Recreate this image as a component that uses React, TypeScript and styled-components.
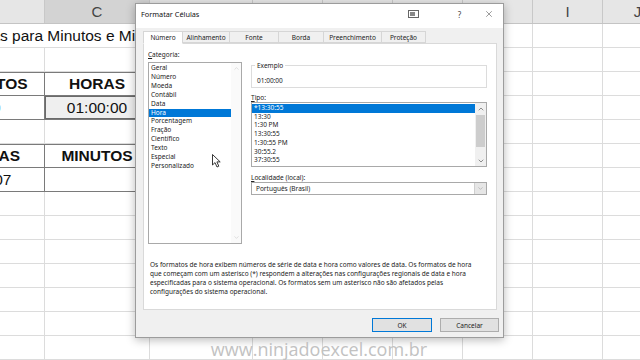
import React from 'react'
import styled, { createGlobalStyle } from 'styled-components'
import { X, ChevronUp, ChevronDown } from 'lucide-react'

const GlobalStyle = createGlobalStyle`
  html, body {
    margin: 0;
    padding: 0;
    overflow: hidden;
    background: #fff;
  }
`

const COLS = '49px 105px 105px 103px 70px 70px 70px 70px 70px 70px 70px'
const LETTERS = ['A', 'B', 'C', 'D', 'E', 'F', 'G', 'H', 'I', 'J', 'K']

const Screen = styled.div`
  position: relative;
  width: 640px;
  height: 360px;
  overflow: hidden;
  background: #fff;
  font-family: 'Liberation Sans', Arial, sans-serif;
`

// ---------- spreadsheet ----------
const Sheet = styled.div`
  margin-left: -109px;
  width: max-content;
`
const HeaderRow = styled.div`
  display: grid;
  grid-template-columns: ${COLS};
  height: 24px;
  box-sizing: border-box;
  background: #e6e6e6;
  border-bottom: 1px solid #c4c4c4;
`
const ColHead = styled.div<{ $active?: boolean }>`
  display: flex;
  align-items: center;
  justify-content: center;
  border-right: 1px solid #c8c8c8;
  background: ${p => (p.$active ? '#d3d3d3' : 'transparent')};
  color: #444;
  font-size: 15px;
`
const Row = styled.div`
  display: grid;
  grid-template-columns: ${COLS};
  height: 24px;
`
const Cell = styled.div<{ $table?: boolean; $top?: boolean; $bold?: boolean; $selected?: boolean }>`
  box-sizing: border-box;
  display: flex;
  align-items: center;
  justify-content: center;
  border-right: 1px solid ${p => (p.$table ? '#7a7a7a' : '#dcdcdc')};
  border-bottom: 1px solid ${p => (p.$table ? '#7a7a7a' : '#dcdcdc')};
  box-shadow: ${p =>
    p.$selected
      ? 'inset 0 0 0 1px #6a6a6a'
      : p.$top
        ? 'inset 0 1px 0 #7a7a7a'
        : 'none'};
  background: ${p => (p.$selected ? '#efefef' : 'transparent')};
  font-size: 15.5px;
  font-weight: ${p => (p.$bold ? 700 : 400)};
  color: #111;
  white-space: nowrap;
`
const TitleCell = styled(Cell)`
  grid-column: span 7;
  justify-content: flex-start;
  padding-left: 3px;
  overflow: visible;
`

type TableRow = { cells: [string, string]; bold?: boolean; top?: boolean; selectC?: boolean }
const TABLE: Record<number, TableRow> = {
  4: { cells: ['MINUTOS', 'HORAS'], bold: true, top: true },
  5: { cells: ['60', '01:00:00'], selectC: true },
  7: { cells: ['HORAS', 'MINUTOS'], bold: true, top: true },
  8: { cells: ['1,007', ''] },
}

function SheetRow({ n }: { n: number }) {
  if (n === 2) {
    return (
      <Row>
        <TitleCell>Converter Horas para Minutos e Minutos para Horas</TitleCell>
        {LETTERS.slice(7).map(l => <Cell key={l} />)}
      </Row>
    )
  }
  const t = TABLE[n]
  return (
    <Row>
      {LETTERS.map((l, i) => {
        if (t && (i === 1 || i === 2)) {
          return (
            <Cell key={l} $table $top={t.top} $bold={t.bold} $selected={i === 2 && t.selectC}>
              {t.cells[i - 1]}
            </Cell>
          )
        }
        return <Cell key={l} />
      })}
    </Row>
  )
}

// ---------- dialog ----------
const Dialog = styled.div`
  position: absolute;
  left: 135px;
  top: 3px;
  width: 369px;
  height: 335px;
  box-sizing: border-box;
  display: flex;
  flex-direction: column;
  background: #f0f0f0;
  border: 1px solid #9c9c9c;
  box-shadow: 0 2px 9px rgba(0, 0, 0, 0.28);
  font-family: 'Noto Sans', 'Liberation Sans', sans-serif;
  font-size: 6.5px;
  color: #1b1b1b;
`
const TitleBar = styled.div`
  height: 24px;
  box-sizing: border-box;
  display: flex;
  align-items: center;
  padding: 0 0 4px 5px;
  background: #fff;
`
const TitleText = styled.div`
  flex: 1;
  font-size: 7.3px;
  color: #111;
`
const TitleButton = styled.div<{ $w: number; $gap?: number }>`
  width: ${p => p.$w}px;
  margin-right: ${p => p.$gap ?? 0}px;
  height: 100%;
  display: flex;
  align-items: center;
  justify-content: center;
  color: #444;
  font-size: 8px;
`
const TabBar = styled.div`
  display: flex;
  margin: 3px 0 0 7px;
  height: 12px;
  position: relative;
  z-index: 1;
`
const Tab = styled.div<{ $active?: boolean; $w: number }>`
  width: ${p => p.$w}px;
  box-sizing: border-box;
  display: flex;
  align-items: center;
  justify-content: center;
  border: 1px solid #d6d6d6;
  border-left: ${p => (p.$active ? '1px solid #d6d6d6' : 'none')};
  border-bottom: ${p => (p.$active ? '1px solid #fff' : '1px solid #d6d6d6')};
  background: ${p => (p.$active ? '#fff' : '#f0f0f0')};
  color: #222;
  height: ${p => (p.$active ? 13 : 12)}px;
  line-height: 9px;
  white-space: nowrap;
`
const Panel = styled.div`
  margin: 0 6px 0 7px;
  height: 267px;
  box-sizing: border-box;
  background: #fff;
  border: 1px solid #d9d9d9;
  padding: 6px 9px 0 4px;
  display: flex;
  flex-direction: column;
`
const TopArea = styled.div`
  display: flex;
  gap: 9px;
`
const LeftCol = styled.div`
  width: 94px;
  display: flex;
  flex-direction: column;
`
const RightCol = styled.div`
  flex: 1;
  display: flex;
  flex-direction: column;
`
const FieldLabel = styled.div<{ $mt?: number }>`
  line-height: 9px;
  margin-top: ${p => p.$mt ?? 0}px;
  color: #222;
`
const ListBox = styled.div<{ $h: number; $mt?: number }>`
  height: ${p => p.$h}px;
  margin-top: ${p => p.$mt ?? 0}px;
  box-sizing: border-box;
  border: 1px solid #a9a9a9;
  display: flex;
  background: #fff;
`
const Items = styled.div`
  flex: 1;
  padding-top: 1px;
  overflow: hidden;
`
const Item = styled.div<{ $selected?: boolean; $lh: number }>`
  line-height: ${p => p.$lh}px;
  padding-left: 2px;
  white-space: nowrap;
  background: ${p => (p.$selected ? '#0078d7' : 'transparent')};
  color: ${p => (p.$selected ? '#fff' : '#1b1b1b')};
`
const ScrollBar = styled.div<{ $light?: boolean }>`
  width: ${p => (p.$light ? 10 : 11)}px;
  display: flex;
  flex-direction: column;
  background: ${p => (p.$light ? '#fafafa' : '#f0f0f0')};
  color: ${p => (p.$light ? '#bcbcbc' : '#5a5a5a')};
`
const Arrow = styled.div`
  height: 11px;
  display: flex;
  align-items: center;
  justify-content: center;
`
const Track = styled.div`
  flex: 1;
`
const Thumb = styled.div`
  margin: 1px 1px 0;
  height: 32px;
  background: #cdcdcd;
`
const GroupBox = styled.fieldset`
  margin: 11px 0 0;
  padding: 0 5px 2px;
  border: 1px solid #dcdcdc;
  min-width: 0;
`
const Legend = styled.legend`
  padding: 0 2px;
  margin-left: -2px;
  line-height: 9px;
  color: #222;
`
const Sample = styled.div`
  margin-top: 6px;
  line-height: 9px;
`
const Select = styled.div`
  height: 13px;
  box-sizing: border-box;
  border: 1px solid #a9a9a9;
  display: flex;
  align-items: center;
`
const SelectText = styled.div`
  flex: 1;
  padding-left: 4px;
`
const SelectButton = styled.div`
  width: 11px;
  height: 100%;
  display: flex;
  align-items: center;
  justify-content: center;
  background: #e6e6e6;
  border-left: 1px solid #cfcfcf;
  color: #8a8a8a;
`
const Description = styled.div`
  margin-top: 16px;
  padding-left: 2px;
  color: #222;
`
const DescLine = styled.div`
  line-height: 9px;
  white-space: nowrap;
`
const Footer = styled.div`
  display: flex;
  justify-content: flex-end;
  gap: 8px;
  padding: 8px 4px 0 0;
`
const Button = styled.div<{ $primary?: boolean; $w: number }>`
  width: ${p => p.$w}px;
  height: 14px;
  box-sizing: border-box;
  display: flex;
  align-items: center;
  justify-content: center;
  background: #e1e1e1;
  border: 1px solid ${p => (p.$primary ? '#0078d7' : '#adadad')};
  color: #1b1b1b;
`
const Cursor = styled.svg`
  position: absolute;
  left: 212px;
  top: 154px;
`
const Watermark = styled.div`
  position: absolute;
  left: 0;
  right: 2px;
  top: 337px;
  text-align: center;
  line-height: 24px;
  font-family: 'Open Sans', 'Liberation Sans', sans-serif;
  font-size: 18px;
  color: #c2c2c2;
`

const TABS = [
  { label: 'Número', w: 40 },
  { label: 'Alinhamento', w: 47 },
  { label: 'Fonte', w: 49 },
  { label: 'Borda', w: 45 },
  { label: 'Preenchimento', w: 58 },
  { label: 'Proteção', w: 44 },
]
const CATEGORIES = ['Geral', 'Número', 'Moeda', 'Contábil', 'Data', 'Hora', 'Porcentagem', 'Fração', 'Científico', 'Texto', 'Especial', 'Personalizado']
const TYPES = ['*13:30:55', '13:30', '1:30 PM', '13:30:55', '1:30:55 PM', '30:55.2', '37:30:55']
const DESCRIPTION = [
  'Os formatos de hora exibem números de série de data e hora como valores de data. Os formatos de hora',
  'que começam com um asterisco (*) respondem a alterações nas configurações regionais de data e hora',
  'especificadas para o sistema operacional. Os formatos sem um asterisco não são afetados pelas',
  'configurações do sistema operacional.',
]

function FormatDialog() {
  return (
    <Dialog>
      <TitleBar>
        <TitleText>Formatar Células</TitleText>
        <TitleButton $w={26} $gap={19}>
          <svg width="11" height="8" viewBox="0 0 11 8">
            <rect x="0.5" y="0.5" width="10" height="7" fill="none" stroke="#666" />
            <rect x="2" y="2" width="5" height="4" fill="#888" />
          </svg>
        </TitleButton>
        <TitleButton $w={29}>?</TitleButton>
        <TitleButton $w={29}>
          <X size={10} strokeWidth={1.3} />
        </TitleButton>
      </TitleBar>
      <TabBar>
        {TABS.map((t, i) => (
          <Tab key={t.label} $w={t.w} $active={i === 0}>{t.label}</Tab>
        ))}
      </TabBar>
      <Panel>
        <TopArea>
          <LeftCol>
            <FieldLabel><u>C</u>ategoria:</FieldLabel>
            <ListBox $h={182} $mt={3}>
              <Items>
                {CATEGORIES.map(c => (
                  <Item key={c} $lh={8.9} $selected={c === 'Hora'}>{c}</Item>
                ))}
              </Items>
              <ScrollBar $light>
                <Arrow><ChevronUp size={7} strokeWidth={1.5} /></Arrow>
                <Track />
                <Arrow><ChevronDown size={7} strokeWidth={1.5} /></Arrow>
              </ScrollBar>
            </ListBox>
          </LeftCol>
          <RightCol>
            <GroupBox>
              <Legend>Exemplo</Legend>
              <Sample>01:00:00</Sample>
            </GroupBox>
            <FieldLabel $mt={5}><u>T</u>ipo:</FieldLabel>
            <ListBox $h={65}>
              <Items>
                {TYPES.map((t, i) => (
                  <Item key={t + i} $lh={8.7} $selected={i === 0}>{t}</Item>
                ))}
              </Items>
              <ScrollBar>
                <Arrow><ChevronUp size={8} strokeWidth={2} /></Arrow>
                <Track><Thumb /></Track>
                <Arrow><ChevronDown size={8} strokeWidth={2} /></Arrow>
              </ScrollBar>
            </ListBox>
            <FieldLabel $mt={5.5}><u>L</u>ocalidade (local):</FieldLabel>
            <Select>
              <SelectText>Português (Brasil)</SelectText>
              <SelectButton><ChevronDown size={7} strokeWidth={1.5} /></SelectButton>
            </Select>
          </RightCol>
        </TopArea>
        <Description>
          {DESCRIPTION.map(l => <DescLine key={l}>{l}</DescLine>)}
        </Description>
      </Panel>
      <Footer>
        <Button $primary $w={60}>OK</Button>
        <Button $w={59}>Cancelar</Button>
      </Footer>
    </Dialog>
  )
}

export default function App() {
  const rows = Array.from({ length: 14 }, (_, i) => i + 2)
  return (
    <Screen>
      <GlobalStyle />
      <Sheet>
        <HeaderRow>
          {LETTERS.map(l => <ColHead key={l} $active={l === 'C'}>{l}</ColHead>)}
        </HeaderRow>
        {rows.map(n => <SheetRow key={n} n={n} />)}
      </Sheet>
      <FormatDialog />
      <Cursor width="10" height="14" viewBox="0 0 10 14">
        <path d="M0.5 0.5 L0.5 11 L3 8.6 L5 13 L6.8 12.2 L4.9 7.9 L8.2 7.9 Z" fill="#fff" stroke="#222" strokeWidth="0.9" strokeLinejoin="round" />
      </Cursor>
      <Watermark>www.ninjadoexcel.com.br</Watermark>
    </Screen>
  )
}
